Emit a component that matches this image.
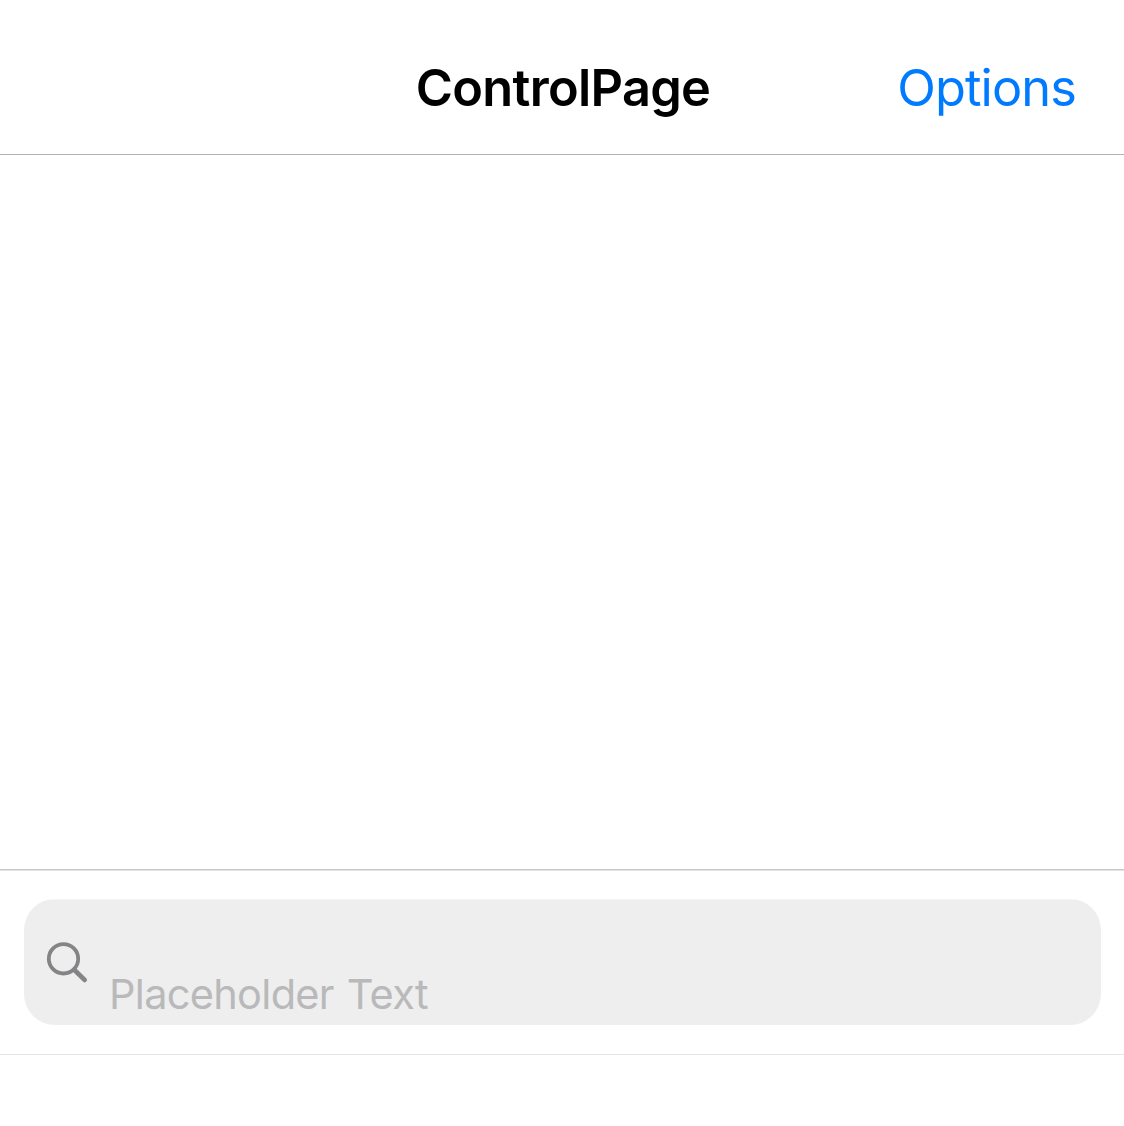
<header>
  <h1>ControlPage</h1>
  <button class="options">Options</button>
</header>
<main></main>
<section class="toolbar">
  <label class="search">
    <svg width="44" height="44" viewBox="0 0 44 44" aria-hidden="true">
      <circle cx="18.5" cy="17.8" r="14.7" />
      <path class="handle" d="M29.2 28.7L39.6 38.9" />
    </svg>
    <span class="placeholder">Placeholder Text</span>
  </label>
</section>

<style>
  :global(body) { background: #fff; }
  :global(#app) {
    height: 1126px;
    display: flex;
    flex-direction: column;
    font-family: Inter, "Liberation Sans", sans-serif;
  }
  header {
    box-sizing: border-box;
    height: 155px;
    padding: 56px 48px 0 50px;
    display: grid;
    grid-template-columns: 1fr auto 1fr;
    align-items: start;
    border-bottom: 1px solid #b3b3b3;
  }
  h1 {
    grid-column: 2;
    margin: 0;
    font-size: 50.5px;
    line-height: 64px;
    font-weight: 600;
    letter-spacing: -0.7px;
    color: #000;
  }
  .options {
    justify-self: end;
    padding: 0;
    border: 0;
    background: none;
    color: #007aff;
    font: 400 50.5px/64px Inter, sans-serif;
    letter-spacing: -0.9px;
  }
  main { height: 714px; }
  .toolbar {
    box-sizing: border-box;
    height: 186px;
    padding: 29px 23px 0 24px;
    border-top: 1px solid #c8c8ca;
    border-bottom: 1px solid #e5e5e5;
    box-shadow: inset 0 1px #e2e2e3;
  }
  .search {
    box-sizing: border-box;
    height: 126px;
    padding: 42px 21px 0;
    display: flex;
    align-items: flex-start;
    gap: 20px;
    border-radius: 31px;
    background: linear-gradient(#f5f5f5 1px, #eee 1px);
  }
  svg { fill: none; stroke: #848487; stroke-width: 3.8; }
  .handle { stroke-width: 4.8; stroke-linecap: round; }
  .placeholder {
    margin-top: 27px;
    font-size: 41.5px;
    line-height: 52px;
    letter-spacing: -0.7px;
    word-spacing: 2px;
    color: #b9b9bb;
    white-space: nowrap;
  }
</style>
